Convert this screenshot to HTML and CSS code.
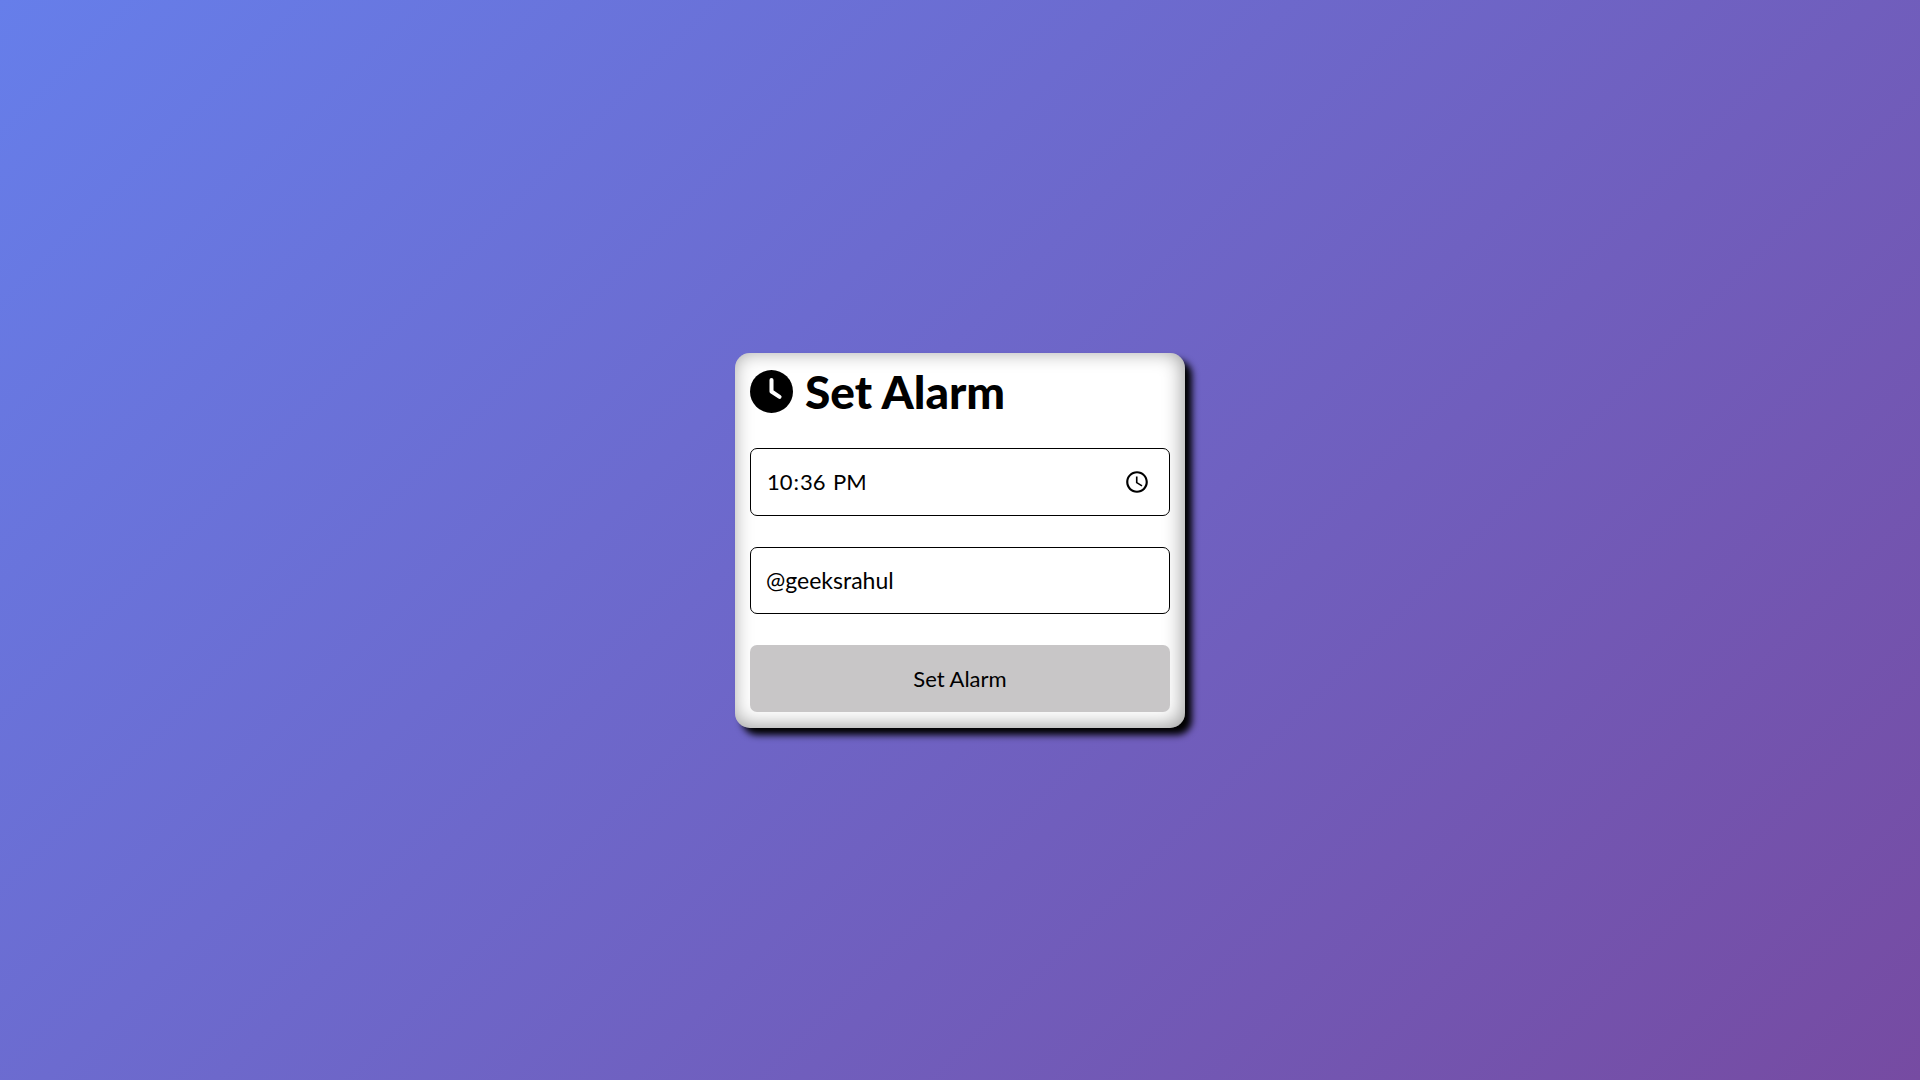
FILE: index.html
```html
<!DOCTYPE html>
<html lang="en">
<head>
  <meta charset="utf-8">
  <meta name="viewport" content="width=device-width, initial-scale=1">
  <title>Set Alarm</title>
  <link rel="stylesheet" href="styles.css">
</head>
<body>
  <main class="card">
    <h1 class="title">
      <svg class="title-icon" viewBox="0 0 512 512" aria-hidden="true">
        <circle cx="256" cy="256" r="256"/>
        <path d="M256 120V256L352 320" fill="none" stroke="#fff" stroke-width="48" stroke-linecap="round" stroke-linejoin="round"/>
      </svg>
      <span>Set Alarm</span>
    </h1>
    <form class="form">
      <input class="field field-time" type="time" value="22:36" aria-label="Alarm time">
      <input class="field" type="text" value="@geeksrahul" aria-label="Alarm label">
      <button class="submit" type="button">Set Alarm</button>
    </form>
  </main>
</body>
</html>
```
FILE: styles.css
```css
* {
  box-sizing: border-box;
}

body {
  margin: 0;
  min-height: 100vh;
  display: flex;
  align-items: center;
  justify-content: center;
  background: linear-gradient(135deg, #667eea 0%, #764ba2 100%);
  font-family: "Gill Sans", "Gill Sans MT", Lato, sans-serif;
  color: #000;
}

.card {
  width: 100%;
  max-width: 450px;
  padding: 15px 15px 16px;
  border-radius: 15px;
  background: #fff;
  box-shadow: 7px 7px 7px #000, inset -2px -2px 20px rgba(0, 0, 0, 0.4);
}

.title {
  display: flex;
  align-items: center;
  gap: 12px;
  margin: 0 0 32px;
  font-size: 46px;
  line-height: 48px;
  font-weight: 900;
}

.title-icon {
  width: 43px;
  height: 43px;
}

.form {
  display: flex;
  flex-direction: column;
  gap: 31px;
}

.field,
.submit {
  width: 100%;
  height: 67px;
  padding: 15px;
  border: 1px solid #000;
  border-radius: 7px;
  background: #fff;
  color: #000;
  font-family: inherit;
  font-size: 23px;
}

.field-time {
  height: 68px;
  padding-right: 16px;
  font-size: 22px;
}

.field-time::-webkit-calendar-picker-indicator {
  width: 26px;
  height: 26px;
}

.submit {
  border: 0;
  background: #c8c6c7;
  font-size: 22px;
}
```
